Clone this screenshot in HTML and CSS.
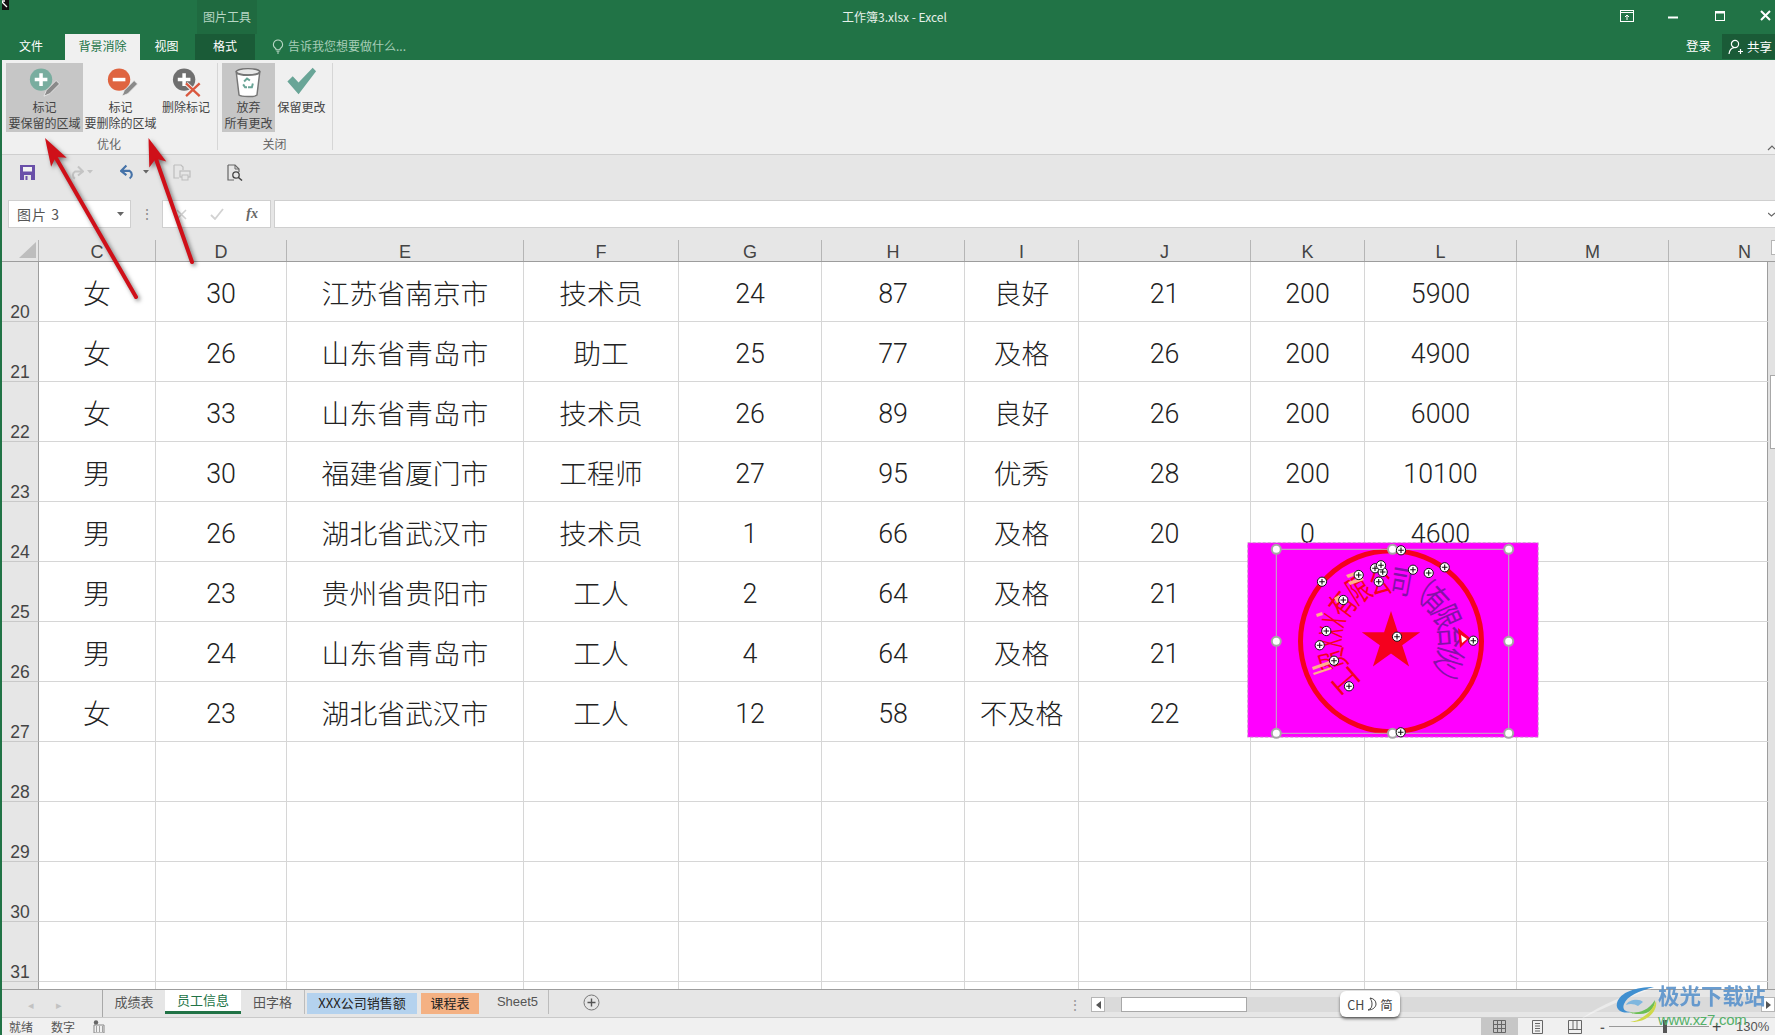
FILE: index.html
```html
<!DOCTYPE html>
<html lang="zh">
<head>
<meta charset="utf-8">
<title>工作簿3.xlsx - Excel</title>
<link rel="stylesheet" href="styles.css">
</head>
<body>
<div class="app">
  <header class="titlebar">
    <div class="title-row">
      <div class="tool-label">图片工具</div>
      <div class="doc-title">工作簿3.xlsx - Excel</div>
      <div class="win-ctrls">
        <svg class="wc wc-ribbon" width="14" height="12" viewBox="0 0 14 12"><rect x=".5" y=".5" width="13" height="11" fill="none" stroke="#fff"/><path d="M1 2.5h12M7 10V5M5 7l2-2 2 2" fill="none" stroke="#fff"/></svg>
        <svg class="wc wc-min" width="10" height="3" viewBox="0 0 10 3"><rect width="10" height="2" y=".5" fill="#fff"/></svg>
        <svg class="wc wc-max" width="10" height="10" viewBox="0 0 10 10"><rect x=".5" y=".5" width="9" height="9" fill="none" stroke="#fff"/><rect width="10" height="2.5" fill="#fff"/></svg>
        <svg class="wc wc-close" width="11" height="11" viewBox="0 0 11 11"><path d="M1 1l9 9M10 1l-9 9" stroke="#fff" stroke-width="2"/></svg>
      </div>
    </div>
    <nav class="tab-row">
      <span class="rtab rtab-file">文件</span>
      <span class="rtab rtab-active">背景消除</span>
      <span class="rtab rtab-view">视图</span>
      <span class="rtab rtab-format">格式</span>
      <svg class="bulb" width="12" height="15" viewBox="0 0 12 15"><path d="M6 1a4.5 4.5 0 0 0-2.6 8.2c.5.4.7 1 .7 1.6h3.8c0-.6.2-1.2.7-1.6A4.5 4.5 0 0 0 6 1zM4.5 12.3h3M5 14h2" fill="none" stroke="#b9d8c6" stroke-width="1.1"/></svg>
      <span class="tell">告诉我您想要做什么...</span>
      <span class="login">登录</span>
      <span class="share">
        <svg width="16" height="16" viewBox="0 0 16 16"><circle cx="7" cy="5" r="3.6" fill="none" stroke="#fff" stroke-width="1.2"/><path d="M1 15c.5-3.5 2.5-6 5-6.3M10 12.5h5M12.5 10v5" fill="none" stroke="#fff" stroke-width="1.2"/></svg>
        共享
      </span>
    </nav>
  </header>

  <section class="ribbon">
    <div class="rgroup rgroup-a">
      <div class="rbtns">
        <div class="rbtn rbtn-keep rbtn-on">
          <svg width="40" height="37" viewBox="0 0 40 37"><circle cx="18" cy="16" r="11.5" fill="#79ad9f"/><path d="M18 9.5v13M11.5 16h13" stroke="#fff" stroke-width="3.6"/><path d="M21 33l2.5-6 10-10 3.5 3.5-10 10z" fill="#8a8a8a" stroke="#f0f0f0" stroke-width=".8"/></svg>
          <span>标记</span><span>要保留的区域</span>
        </div>
        <div class="rbtn rbtn-del">
          <svg width="40" height="37" viewBox="0 0 40 37"><circle cx="18" cy="16" r="11.5" fill="#df6440"/><path d="M11.5 16h13" stroke="#fff" stroke-width="3.6"/><path d="M21 33l2.5-6 10-10 3.5 3.5-10 10z" fill="#8a8a8a" stroke="#f0f0f0" stroke-width=".8"/></svg>
          <span>标记</span><span>要删除的区域</span>
        </div>
        <div class="rbtn rbtn-rem">
          <svg width="40" height="37" viewBox="0 0 40 37"><circle cx="16" cy="16" r="11.5" fill="#6f6f6f"/><path d="M16 9.5v13M9.5 16h13" stroke="#fff" stroke-width="3.6"/><path d="M18 20l14 13M32 20L18 33" stroke="#f0f0f0" stroke-width="4.4"/><path d="M18 20l14 13M32 20L18 33" stroke="#d9583f" stroke-width="2.4"/></svg>
          <span>删除标记</span>
        </div>
      </div>
      <div class="rgroup-label">优化</div>
    </div>
    <div class="rgroup rgroup-b">
      <div class="rbtns">
        <div class="rbtn rbtn-discard rbtn-on">
          <svg width="40" height="37" viewBox="0 0 40 37"><ellipse cx="20" cy="9" rx="12" ry="3.2" fill="#e8e8e8" stroke="#6f6f6f" stroke-width="1.5"/><path d="M8 10l2.8 23c2 2 16.4 2 18.4 0L32 10c-3 3.5-21 3.5-24 0z" fill="#fff" stroke="#777" stroke-width="1.5"/><path d="M16 19l3-3 3 2M25 21l-1 4-4 0M15 22l2 3h2" fill="none" stroke="#6aa597" stroke-width="2"/></svg>
          <span>放弃</span><span>所有更改</span>
        </div>
        <div class="rbtn rbtn-keepchg">
          <svg width="40" height="37" viewBox="0 0 40 37"><path d="M6 19l5.5-5.500 6 6.500L32 5l3.500 3.500L17.500 32z" fill="#69a597"/></svg>
          <span>保留更改</span>
        </div>
      </div>
      <div class="rgroup-label">关闭</div>
    </div>
    <svg class="collapse" width="8" height="6" viewBox="0 0 8 6"><path d="M1 5l4-4 3 3" fill="none" stroke="#666" stroke-width="1.2"/></svg>
  </section>

  <section class="qat">
    <svg class="q q-save" width="15" height="15" viewBox="0 0 15 15"><path d="M0 0h15v15H0z" fill="#6a50a9"/><rect x="3" y="2" width="9" height="4.5" fill="#f2f2f2"/><rect x="4" y="10" width="7" height="5" fill="#e6e6e6"/><rect x="5.5" y="11" width="2" height="4" fill="#6a50a9"/></svg>
    <svg class="q q-redo" width="15" height="15" viewBox="0 0 15 14"><path d="M13 6H6a4 4 0 0 0 0 7M9 1l5 5-5 4" fill="none" stroke="#c4c4c4" stroke-width="2"/></svg>
    <svg class="q q-dd1" width="6" height="4" viewBox="0 0 6 4"><path d="M0 0h6L3 3.5z" fill="#c4c4c4"/></svg>
    <svg class="q q-undo" width="16" height="16" viewBox="0 0 15 14"><path d="M2 6h7a4 4 0 0 1 0 7M6 1L1 6l5 4" fill="none" stroke="#4572a8" stroke-width="2"/></svg>
    <svg class="q q-dd2" width="6" height="4" viewBox="0 0 6 4"><path d="M0 0h6L3 3.5z" fill="#666"/></svg>
    <svg class="q q-print" width="18" height="17" viewBox="0 0 18 17"><path d="M1 1h7l2 2v3M1 1v13h5" fill="none" stroke="#bdbdbd" stroke-width="1.2"/><rect x="7" y="7" width="10" height="6" fill="none" stroke="#bdbdbd" stroke-width="1.2"/><rect x="9" y="11" width="6" height="5" fill="#e6e6e6" stroke="#bdbdbd"/></svg>
    <svg class="q q-preview" width="16" height="17" viewBox="0 0 16 17"><path d="M1 1h7l4 4v3M1 1v15h6" fill="none" stroke="#666" stroke-width="1.2"/><path d="M8 1v4h4" fill="none" stroke="#666"/><circle cx="9" cy="11" r="3.2" fill="none" stroke="#444" stroke-width="1.3"/><path d="M11.5 13.5L15 16.5" stroke="#444" stroke-width="1.5"/></svg>
  </section>

  <section class="formula">
    <div class="namebox"><span>图片 3</span><svg width="7" height="4" viewBox="0 0 7 4"><path d="M0 0h7L3.5 4z" fill="#666"/></svg></div>
    <div class="fdots">⋮</div>
    <div class="fxbox">
      <svg width="11" height="11" viewBox="0 0 11 11"><path d="M1 1l9 9M10 1l-9 9" stroke="#d2d2d2" stroke-width="1.6"/></svg>
      <svg width="14" height="12" viewBox="0 0 14 12"><path d="M1 7l4 4 8-10" fill="none" stroke="#d2d2d2" stroke-width="1.8"/></svg>
      <span class="fx">fx</span>
    </div>
    <div class="finput"><svg width="7" height="5" viewBox="0 0 7 5"><path d="M0 1l3.5 3L7 1" fill="none" stroke="#666" stroke-width="1.2"/></svg></div>
  </section>

  <section class="colhead">
    <div class="corner"><svg width="17" height="16" viewBox="0 0 17 16"><path d="M17 0v16H0z" fill="#bdbdbd"/></svg></div>
    <div class="colgrid">
      <span>C</span><span>D</span><span>E</span><span>F</span><span>G</span><span>H</span><span>I</span><span>J</span><span>K</span><span>L</span><span>M</span><span class="col-n">N</span>
    </div>
    <div class="vs-top"><i></i></div>
  </section>

  <main class="sheet">
    <div class="rows">
      <div class="row"><b>20</b><span class="z">女</span><span>30</span><span class="z">江苏省南京市</span><span class="z">技术员</span><span>24</span><span>87</span><span class="z">良好</span><span>21</span><span>200</span><span>5900</span><span></span><span></span></div>
      <div class="row"><b>21</b><span class="z">女</span><span>26</span><span class="z">山东省青岛市</span><span class="z">助工</span><span>25</span><span>77</span><span class="z">及格</span><span>26</span><span>200</span><span>4900</span><span></span><span></span></div>
      <div class="row"><b>22</b><span class="z">女</span><span>33</span><span class="z">山东省青岛市</span><span class="z">技术员</span><span>26</span><span>89</span><span class="z">良好</span><span>26</span><span>200</span><span>6000</span><span></span><span></span></div>
      <div class="row"><b>23</b><span class="z">男</span><span>30</span><span class="z">福建省厦门市</span><span class="z">工程师</span><span>27</span><span>95</span><span class="z">优秀</span><span>28</span><span>200</span><span>10100</span><span></span><span></span></div>
      <div class="row"><b>24</b><span class="z">男</span><span>26</span><span class="z">湖北省武汉市</span><span class="z">技术员</span><span>1</span><span>66</span><span class="z">及格</span><span>20</span><span>0</span><span>4600</span><span></span><span></span></div>
      <div class="row"><b>25</b><span class="z">男</span><span>23</span><span class="z">贵州省贵阳市</span><span class="z">工人</span><span>2</span><span>64</span><span class="z">及格</span><span>21</span><span></span><span></span><span></span><span></span></div>
      <div class="row"><b>26</b><span class="z">男</span><span>24</span><span class="z">山东省青岛市</span><span class="z">工人</span><span>4</span><span>64</span><span class="z">及格</span><span>21</span><span></span><span></span><span></span><span></span></div>
      <div class="row"><b>27</b><span class="z">女</span><span>23</span><span class="z">湖北省武汉市</span><span class="z">工人</span><span>12</span><span>58</span><span class="z">不及格</span><span>22</span><span></span><span></span><span></span><span></span></div>
      <div class="row"><b>28</b><span></span><span></span><span></span><span></span><span></span><span></span><span></span><span></span><span></span><span></span><span></span><span></span></div>
      <div class="row"><b>29</b><span></span><span></span><span></span><span></span><span></span><span></span><span></span><span></span><span></span><span></span><span></span><span></span></div>
      <div class="row"><b>30</b><span></span><span></span><span></span><span></span><span></span><span></span><span></span><span></span><span></span><span></span><span></span><span></span></div>
      <div class="row"><b>31</b><span></span><span></span><span></span><span></span><span></span><span></span><span></span><span></span><span></span><span></span><span></span><span></span></div>
      <div class="row"><b></b><span></span><span></span><span></span><span></span><span></span><span></span><span></span><span></span><span></span><span></span><span></span><span></span></div>
    </div>
    <div class="vscroll"><i></i></div>

    <svg class="picture" width="400" height="240" viewBox="0 0 400 240">
      <defs>
        <g id="mk"><circle r="4.6" fill="#fff" stroke="#111" stroke-width="1"/><path d="M-2.800 0h5.600M0-2.800v5.600" stroke="#111" stroke-width="1.1"/></g>
        <circle id="hd" r="4.5" fill="#fff" stroke="#a6a6a6" stroke-width="2"/>
      </defs>
      <rect x="47.7" y="22.7" width="290.5" height="194.5" fill="#ff00ff" stroke="#c9a6c9" stroke-dasharray="3 2"/>
      <circle cx="191" cy="121.3" r="90.5" fill="none" stroke="#f5001e" stroke-width="5"/>
      <path d="M191 91l6.900 21.200h22.300l-18 13.100 6.900 21.200-18.100-13.100-18.100 13.100 6.900-21.200-18-13.100h22.300z" fill="#f5001e"/>
      <g class="seal seal-red">
        <text transform="translate(191 121.3) rotate(-131) translate(0 -49) scale(.75 1.1)">工</text>
        <text transform="translate(191 121.3) rotate(-108) translate(0 -49) scale(.75 1.1)">贸</text>
        <text transform="translate(191 121.3) rotate(-92) translate(0 -49) scale(.55 1.1)">X</text>
        <text transform="translate(191 121.3) rotate(-81) translate(0 -49) scale(.55 1.1)">X</text>
        <text transform="translate(191 121.3) rotate(-70) translate(0 -49) scale(.55 1.1)">X</text>
        <text transform="translate(191 121.3) rotate(-53) translate(0 -49) scale(.75 1.1)">有</text>
        <text transform="translate(191 121.3) rotate(-32) translate(0 -49) scale(.75 1.1)">限</text>
        <text transform="translate(191 121.3) rotate(-10) translate(0 -49) scale(.75 1.1)">公</text>
      </g>
      <g class="seal seal-purple">
        <text transform="translate(191 121.3) rotate(10) translate(0 -49) scale(.75 1.1)">司</text>
        <text transform="translate(191 121.3) rotate(29) translate(0 -49) scale(.75 1.1)">（</text>
        <text transform="translate(191 121.3) rotate(47) translate(0 -49) scale(.75 1.1)">有</text>
        <text transform="translate(191 121.3) rotate(66) translate(0 -49) scale(.75 1.1)">限</text>
        <text transform="translate(191 121.3) rotate(86) translate(0 -49) scale(.75 1.1)">合</text>
        <text transform="translate(191 121.3) rotate(106) translate(0 -49) scale(.75 1.1)">伙</text>
        <text transform="translate(191 121.3) rotate(126) translate(0 -49) scale(.75 1.1)">）</text>
      </g>
      <path d="M258 108l12 10-10 10z" fill="#f5001e"/><path d="M261 115l6 4-5 4z" fill="#fff"/>
      <path d="M112 147l20-7 1 3-20 7zM113 153l18-6 1 2-18 6zM146 55l14-5 2 3-14 5zM148 62l14-5 2 3-14 5zM134 78l5-3 3 5-5 3zM116 94l6-2 1 3-6 2z" fill="#ffb08a"/>
      <rect x="76.3" y="29.3" width="232.4" height="184" fill="none" stroke="#b9b9b9"/>
      <use href="#hd" x="76.3" y="29.3"/><use href="#hd" x="192.5" y="29.3"/><use href="#hd" x="308.7" y="29.3"/>
      <use href="#hd" x="76.3" y="121.3"/><use href="#hd" x="308.7" y="121.3"/>
      <use href="#hd" x="76.3" y="213.3"/><use href="#hd" x="192.5" y="213.3"/><use href="#hd" x="308.7" y="213.3"/>
      <use href="#mk" x="122" y="61.7"/><use href="#mk" x="143.3" y="80"/><use href="#mk" x="158.7" y="55"/>
      <use href="#mk" x="175" y="48.3"/><use href="#mk" x="182.7" y="52"/><use href="#mk" x="181" y="45.3"/>
      <use href="#mk" x="178.7" y="61.7"/><use href="#mk" x="201" y="30.3"/><use href="#mk" x="213" y="49.7"/>
      <use href="#mk" x="228.7" y="53"/><use href="#mk" x="244.7" y="47.3"/><use href="#mk" x="126.3" y="111"/>
      <use href="#mk" x="119.7" y="125.3"/><use href="#mk" x="134" y="140.7"/><use href="#mk" x="149" y="166.3"/>
      <use href="#mk" x="197" y="116.7"/><use href="#mk" x="273.3" y="120.7"/><use href="#mk" x="200.7" y="212.3"/>
    </svg>
  </main>

  <section class="tabsbar">
    <span class="nav nav-l">◂</span><span class="nav nav-r">▸</span>
    <div class="stabs">
      <span class="stab st-1">成绩表</span>
      <span class="stab st-2">员工信息</span>
      <span class="stab st-3">田字格</span>
      <span class="stab st-4">XXX公司销售额</span>
      <span class="stab st-5">课程表</span>
      <span class="stab st-6">Sheet5</span>
    </div>
    <svg class="addsheet" width="17" height="17" viewBox="0 0 17 17"><circle cx="8.5" cy="8.5" r="7.5" fill="none" stroke="#777"/><path d="M8.5 4.5v8M4.5 8.5h8" stroke="#555" stroke-width="1.4"/></svg>
    <span class="hdots">⋮</span>
    <div class="hscroll">
      <span class="harrow"><svg width="5" height="8" viewBox="0 0 5 8"><path d="M5 0v8L0 4z" fill="#555"/></svg></span>
      <span class="hthumb"></span>
      <span class="harrow harrow-r"><svg width="5" height="8" viewBox="0 0 5 8"><path d="M0 0v8l5-4z" fill="#555"/></svg></span>
    </div>
  </section>

  <footer class="status">
    <span class="st-ready">就绪</span>
    <span class="st-num">数字</span>
    <svg class="st-macro" width="12" height="13" viewBox="0 0 12 13"><circle cx="3" cy="2.5" r="2.2" fill="#666"/><path d="M1 5h10v8H1z" fill="none" stroke="#888"/><path d="M3 7h1M6 7h1M9 7h1M3 9h1M6 9h1M9 9h1M3 11h1M6 11h1M9 11h1" stroke="#555"/></svg>
    <span class="view view-on"><svg width="13" height="13" viewBox="0 0 13 13"><path d="M.5.5h12v12H.5zM4.5.5v12M8.5.5v12M.5 4.5h12M.5 8.5h12" fill="none" stroke="#666"/></svg></span>
    <span class="view"><svg width="11" height="14" viewBox="0 0 11 14"><path d="M.5.5h10v13H.5zM3 3.5h5M3 6h5M3 8.5h5M3 11h5" fill="none" stroke="#666"/></svg></span>
    <span class="view"><svg width="14" height="14" viewBox="0 0 14 14"><path d="M.5.5h13v13H.5zM.5 9.5h13M5 .5v9M9 .5v9" fill="none" stroke="#666"/></svg></span>
    <span class="zoom-minus">-</span>
    <span class="zoom-track"><i></i></span>
    <span class="zoom-plus">+</span>
    <span class="zoom-val">130%</span>
  </footer>

  <svg class="cursor" width="9" height="10" viewBox="0 0 9 10"><rect width="9" height="10" fill="#111"/><path d="M1 1l6 6M1 1h4M1 1v4" stroke="#fff" stroke-width="1.3" fill="none"/></svg>

  <div class="ime">CH <svg width="10" height="14" viewBox="0 0 10 14"><path d="M3 1c4 .5 6 3 6 6s-3 6-8 6c3-1 4-3 4-6S4 3 3 1z" fill="none" stroke="#444"/></svg> 简</div>

  <div class="watermark">
    <svg class="wm-logo" width="44" height="40" viewBox="0 0 44 40"><path d="M40 2C10 8-15 20-33 33c18-9 45-21 73-31z" fill="#fff" opacity=".45"/><path d="M40 1C22 1 6 6 3 17c-2 8 7 11 14 9-6 0-9-3-7-8C13 10 25 5 40 1z" fill="#3f8fd0"/><path d="M12 19c2-5 13-7 17-3l-5 4c-3-2-8-3-12-1z" fill="#7fb7df"/><path d="M41 14c0 9-7 15-17 14-5 0-7-1-9-2 6 1 18 1 26-12z" fill="#6cbf55"/><path d="M42 15c2 10-9 22-26 21 9-1 21-8 26-21z" fill="#cfd84a"/></svg>
    <div class="wm-text"><span class="wm-cn">极光下载站</span><span class="wm-en">www.xz7.com</span></div>
  </div>

  <svg class="arrows" width="260" height="320" viewBox="0 0 260 320">
    <g>
      <path d="M56 158L136 297" stroke="#cf1019" stroke-width="4" stroke-linecap="round"/>
      <path d="M45 138L66.700 157.800 55.900 157.100 51.100 166.800z" fill="#cf1019"/>
      <path d="M156 159L192 262" stroke="#cf1019" stroke-width="4" stroke-linecap="round"/>
      <path d="M148.500 138L166.300 161.400 155.800 158.800 149.300 167.400z" fill="#cf1019"/>
    </g>
  </svg>
</div>
</body>
</html>
```

FILE: styles.css
```css
* { box-sizing: border-box; }
html, body { margin: 0; padding: 0; }
body { font-family: "Noto Sans CJK SC", "Liberation Sans", sans-serif; font-size: 12px; color: #444; background: #fff; }
.app { position: relative; width: 1775px; height: 1035px; overflow: hidden; display: flex; flex-direction: column; border-left: 2px solid #217346; }

/* title bar */
.titlebar { height: 60px; background: #217346; color: #fff; flex: none; display: flex; flex-direction: column; }
.title-row { height: 34px; display: flex; align-items: center; position: relative; }
.tool-label { position: absolute; left: 195px; top: 0; width: 60px; height: 34px; background: #1f6a40; color: #b7d6c4; text-align: center; line-height: 34px; }
.doc-title { position: absolute; left: 0; width: 1785px; top: 0; line-height: 34px; text-align: center; color: #e6f0ea; font-size: 12px; }
.win-ctrls { position: absolute; top: 0; left: 0; width: 1773px; height: 34px; }
.wc { position: absolute; }
.wc-ribbon { left: 1618px; top: 10px; }
.wc-min { left: 1666px; top: 16px; }
.wc-max { left: 1713px; top: 11px; }
.wc-close { left: 1758px; top: 10px; }
.tab-row { height: 26px; display: flex; align-items: center; position: relative; font-size: 12px; }
.rtab { display: flex; align-items: center; justify-content: center; height: 26px; color: #fff; padding-bottom: 4px; }
.rtab-file { width: 63px; padding-right: 5px; }
.rtab-active { width: 75px; background: #f0f0f0; color: #217346; }
.rtab-view { width: 55px; padding-right: 2px; }
.rtab-format { width: 60px; background: #1a5b37; height: 26px; }
.bulb { margin-left: 17px; margin-bottom: 2px; }
.tell { margin-left: 4px; color: #a6cdb7; margin-bottom: 3px; }
.login { margin-left: auto; margin-right: 11px; color: #fff; font-size: 12.5px; margin-bottom: 3px; }
.share { width: 53px; height: 25px; background: #1a5b37; display: flex; align-items: center; gap: 3px; padding-left: 6px; font-size: 12.5px; white-space: nowrap; margin-bottom: 1px; }

/* ribbon */
.ribbon { height: 95px; flex: none; background: #f0f0f0; border-bottom: 1px solid #cfcfcf; display: flex; padding-top: 3px; position: relative; }
.rgroup { display: flex; flex-direction: column; border-right: 1px solid #d6d6d6; height: 87px; }
.rgroup-a { width: 216px; padding-left: 4px; }
.rgroup-b { width: 115px; padding-left: 4px; }
.rbtns { display: flex; height: 69px; }
.rbtn { display: flex; flex-direction: column; align-items: center; font-size: 12px; line-height: 15.5px; color: #444; white-space: nowrap; }
.rbtn svg { flex: none; height: 36px; }
.rbtn-on { background: #c6c6c6; }
.rbtn-keep { width: 77px; }
.rbtn-keep svg { transform: translate(-2px, 1px); }
.rbtn-del { width: 75px; }
.rbtn-del svg { transform: translate(0, 1px); }
.rbtn-rem { width: 56px; }
.rbtn-rem svg { transform: translate(2px, 1px); }
.rbtn-discard { width: 53px; }
.rbtn-discard svg { transform: translate(-1px, 0); }
.rbtn-keepchg { width: 53px; }
.rbtn-keepchg svg { transform: translate(-1px, 0); }
.rgroup-label { height: 18px; line-height: 24px; text-align: center; color: #666; font-size: 12px; padding-right: 5px; }
.collapse { position: absolute; right: 0; bottom: 3px; }

/* quick access */
.qat { height: 45px; flex: none; background: #e6e6e6; display: flex; align-items: center; padding-bottom: 11px; }
.q { flex: none; }
.q-save { margin-left: 18px; }
.q-redo { margin-left: 34px; }
.q-dd1 { margin-left: 3px; }
.q-undo { margin-left: 27px; }
.q-dd2 { margin-left: 7px; }
.q-print { margin-left: 24px; }
.q-preview { margin-left: 36px; }

/* formula bar */
.formula { height: 28px; flex: none; background: #e6e6e6; display: flex; }
.namebox { margin-left: 6px; width: 123px; background: #fff; border: 1px solid #cfcfcf; display: flex; align-items: center; justify-content: space-between; padding: 0 6px 0 8px; font-size: 14px; color: #555; letter-spacing: 1px; }
.fdots { width: 31px; text-align: center; color: #8c8c8c; line-height: 26px; font-size: 14px; }
.fxbox { width: 109px; background: #fff; border: 1px solid #cfcfcf; display: flex; align-items: center; padding: 0 12px 0 13px; justify-content: space-between; }
.fx { font-family: "Liberation Serif", serif; font-style: italic; font-weight: bold; color: #666; font-size: 14px; }
.finput { margin-left: 3px; flex: 1; background: #fff; border: 1px solid #cfcfcf; border-right: 0; display: flex; justify-content: flex-end; align-items: center; }

/* column header */
.colhead { height: 34px; flex: none; display: flex; background: #e6e6e6; border-bottom: 1px solid #9d9d9d; }
.corner { width: 37px; flex: none; display: flex; align-items: flex-end; justify-content: flex-end; padding: 0 2px 3px 0; border-right: 1px solid #b5b5b5; margin-top: 12px; }
.colgrid { display: grid; grid-template-columns: 117px 131px 237px 155px 143px 143px 114px 172px 114px 152px 152px 99px; align-items: end; height: 33px; }
.colgrid span { height: 21px; line-height: 25px; text-align: center; border-right: 1px solid #b5b5b5; font-family: "Liberation Sans", sans-serif; font-size: 18px; color: #444; }
.colgrid .col-n { border-right: 0; text-align: right; padding-right: 17px; }
.vs-top { width: 7px; flex: none; padding: 12px 0 0 3px; background: #e6e6e6; }
.vs-top i { display: block; width: 5px; height: 15px; background: #fff; border: 1px solid #b5b5b5; border-right: 0; }

/* sheet */
.sheet { height: 727px; flex: none; position: relative; display: flex; overflow: hidden; background: #fff; }
.rows { flex: none; width: 1766px; border-right: 1px solid #9d9d9d; }
.row { display: grid; grid-template-columns: 37px 117px 131px 237px 155px 143px 143px 114px 172px 114px 152px 152px 99px; height: 60px; }
.row b { font-weight: 400; background: #e6e6e6; border-right: 1px solid #9d9d9d; border-bottom: 1px solid #c9c9c9; display: flex; align-items: flex-end; justify-content: center; font-family: "Liberation Sans", sans-serif; font-size: 17.5px; color: #444; line-height: 17px; }
.row span { border-right: 1px solid #d6d6d6; border-bottom: 1px solid #d6d6d6; display: flex; align-items: center; justify-content: center; padding-top: 4px; font-family: Roboto, "Noto Sans CJK SC", sans-serif; font-weight: 300; font-size: 26.8px; color: #222; }
.row .z { font-family: "Noto Sans CJK SC", sans-serif; font-size: 27.8px; padding-top: 1px; padding-bottom: 0; }
.row span:last-child { border-right: 0; }
.vscroll { flex: 1; background: #e2e2e2; padding: 113px 0 0 2px; }
.vscroll i { display: block; height: 74px; background: #fff; border: 1px solid #a8a8a8; border-right: 0; }
.picture { position: absolute; left: 1198px; top: 258px; }
.seal text { font-family: "Noto Sans CJK SC", sans-serif; font-size: 29px; text-anchor: middle; }
.seal-red text { fill: #f5001e; }
.seal-purple text { fill: #8412a8; }

/* sheet tabs */
.tabsbar { height: 28px; flex: none; background: #e6e6e6; border-top: 1px solid #9d9d9d; display: flex; align-items: center; position: relative; font-size: 13px; }
.nav { color: #c2c2c2; width: 28px; text-align: center; font-size: 11px; }
.nav-l { margin-left: 15px; }
.stabs { display: flex; margin-left: 29px; height: 27px; border-left: 1px solid #a8a8a8; }
.stab { display: flex; align-items: center; justify-content: center; color: #555; height: 24px; white-space: nowrap; padding-bottom: 2px; }
.st-1 { width: 62px; }
.st-2 { width: 76px; background: #fff; color: #217346; border-bottom: 3px solid #217346; }
.st-3 { width: 64px; border-right: 1px solid #bcbcbc; }
.st-4 { width: 110px; margin: 3px 4px 0 2px; height: 21px; background: #b4d2ee; color: #222; padding-bottom: 3px; }
.st-5 { width: 58px; margin-top: 3px; height: 21px; background: #f4b183; color: #222; margin-right: 2px; padding-bottom: 3px; }
.st-6 { width: 68px; border-right: 1px solid #bcbcbc; padding-left: 6px; font-family: "Liberation Sans", sans-serif; }
.addsheet { margin-left: 34px; flex: none; margin-bottom: 2px; }
.hdots { position: absolute; left: 1066px; top: 4px; color: #999; font-size: 14px; }
.hscroll { position: absolute; left: 1089px; top: 7px; width: 684px; height: 15px; background: #dadada; display: flex; align-items: stretch; }
.harrow { width: 14px; height: 15px; background: #fff; border: 1px solid #b5b5b5; display: flex; align-items: center; justify-content: center; flex: none; }
.harrow-r { margin-left: auto; }
.hthumb { margin-left: 16px; width: 126px; background: #fff; border: 1px solid #a8a8a8; }

/* status bar */
.status { height: 18px; flex: none; background: #f0f0f0; border-top: 1px solid #c9c9c9; display: flex; align-items: center; font-size: 12px; line-height: 16px; color: #555; position: relative; }
.st-ready { margin-left: 7px; }
.st-num { margin-left: 18px; }
.st-macro { margin-left: 18px; }
.view { width: 38px; height: 17px; display: flex; align-items: center; justify-content: center; flex: none; }
.view-on { width: 37px; background: #c6c6c6; margin-left: auto; }
.zoom-minus { margin-left: 6px; width: 8px; font-weight: bold; font-size: 13px; flex: none; }
.zoom-track { width: 100px; height: 1px; background: #999; position: relative; margin-left: 1px; flex: none; }
.zoom-track i { position: absolute; left: 54px; top: -6px; width: 4px; height: 13px; background: #555; }
.zoom-plus { margin-left: 3px; font-family: "Liberation Sans", sans-serif; font-size: 16px; color: #444; width: 12px; line-height: 16px; flex: none; }
.zoom-val { margin-left: 12px; width: 39px; flex: none; font-family: "Liberation Sans", sans-serif; font-size: 13px; white-space: nowrap; }

/* overlays */
.cursor { position: absolute; left: -2px; top: 0; }
.ime { position: absolute; left: 1338px; top: 991px; width: 60px; height: 26px; background: #fff; border-radius: 6px; box-shadow: 0 2px 3px rgba(0,0,0,.55); display: flex; align-items: center; justify-content: center; gap: 3px; font-size: 12.5px; color: #444; white-space: nowrap; }
.watermark { position: absolute; left: 1612px; top: 986px; display: flex; }
.wm-logo { overflow: visible; flex: none; }
.wm-text { display: flex; flex-direction: column; }
.wm-cn { font-size: 21.5px; line-height: 24px; font-weight: 700; color: #5a93cc; white-space: nowrap; opacity: .9; margin-top: -3px; }
.wm-en { font-family: "Liberation Sans", sans-serif; font-size: 15px; line-height: 16px; color: #55b06a; white-space: nowrap; margin-top: 5px; letter-spacing: -.3px; }
.arrows { position: absolute; left: -2px; top: 0; filter: drop-shadow(2px 2px 2px rgba(0,0,0,.5)); pointer-events: none; }
```
